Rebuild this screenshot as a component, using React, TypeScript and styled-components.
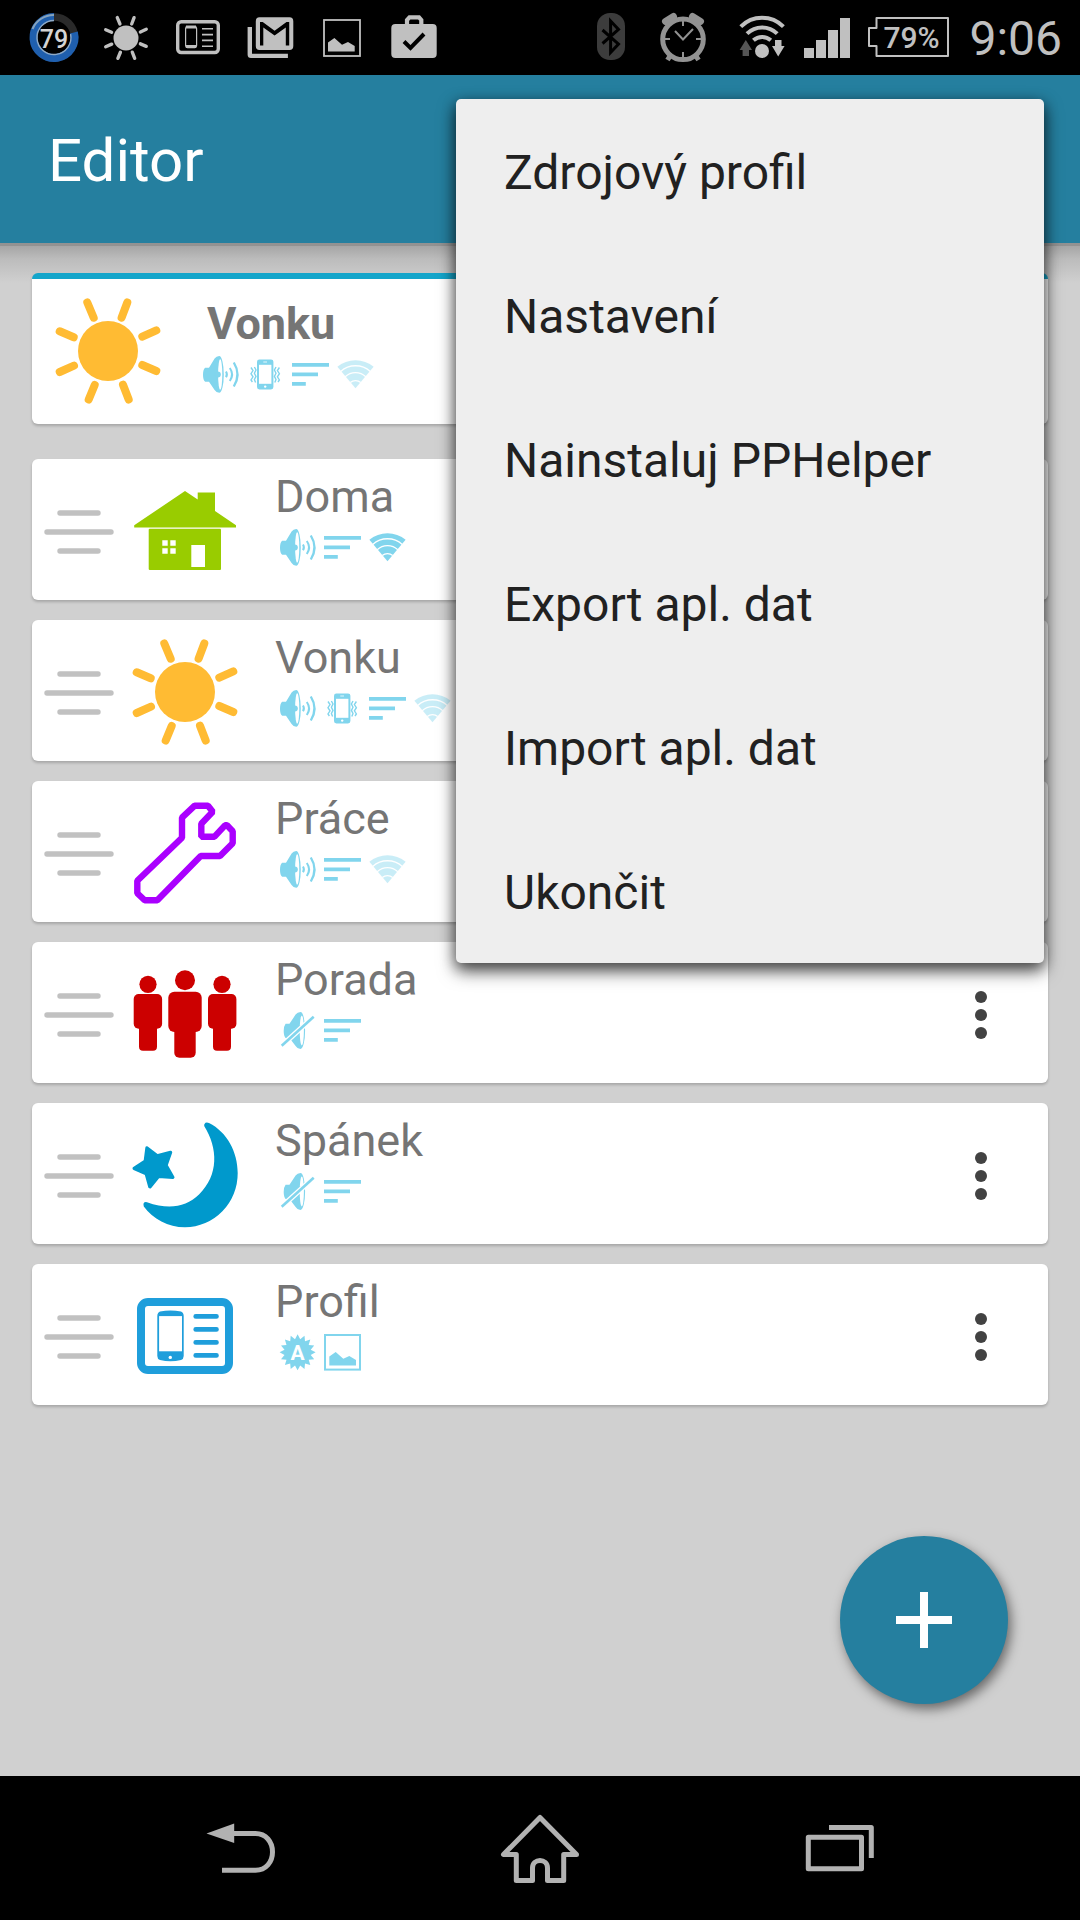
import React from "react";
import styled, { createGlobalStyle } from "styled-components";

const GlobalStyle = createGlobalStyle`
  *, *::before, *::after { box-sizing: border-box; }
  body { margin: 0; font-family: Roboto, "Noto Sans", sans-serif; background: #d0d0d0; }
  button { font: inherit; color: inherit; background: none; border: 0; padding: 0; cursor: pointer; }
  svg { display: block; flex: none; }
`;

const Screen = styled.div`
  position: relative;
  display: flex;
  flex-direction: column;
  min-height: 100vh;
`;

const StatusBar = styled.header`
  display: flex;
  align-items: center;
  justify-content: space-between;
  height: 75px;
  padding: 0 18px;
  background: #000;
  color: #c0c0c0;
`;

const StatusGroup = styled.div<{ $gap?: number }>`
  display: flex;
  align-items: center;
  gap: ${(p) => p.$gap ?? 0}px;
`;

const Clock = styled.time`
  padding-top: 2px;
  font-size: 48px;
  line-height: 76px;
`;

const AppBar = styled.div`
  display: flex;
  align-items: center;
  height: 168px;
  padding: 4px 48px 0;
  background: #257f9f;
`;

const AppTitle = styled.h1`
  margin: 0;
  color: #fff;
  font-size: 60px;
  font-weight: 400;
  line-height: 72px;
`;

const Content = styled.main`
  position: relative;
  flex: 1;
  padding: 30px 32px;
  background:
    linear-gradient(#929292, #929292) top / 100% 3px no-repeat,
    linear-gradient(#a0a0a0, #bcbcbc 16px, #d0d0d0 40px) top / 100% 40px no-repeat,
    #d0d0d0;
`;

const Card = styled.article`
  display: flex;
  background: #fff;
  border-radius: 6px;
  box-shadow: 0 2px 3px rgba(0, 0, 0, 0.2);
`;

const ActiveCard = styled(Card)`
  height: 151px;
  margin-bottom: 35px;
  padding: 18px 22px;
  border-top: 6px solid #14a5ca;

  > svg { margin-right: 36px; }
`;

const ProfileList = styled.ul`
  display: flex;
  flex-direction: column;
  gap: 20px;
  margin: 0;
  padding: 0;
  list-style: none;
`;

const ProfileCard = styled(Card)`
  height: 141px;
  padding: 11px 32px 0 12px;
`;

const Handle = styled.button`
  width: 70px;
  margin-right: 17px;
  padding-bottom: 6px;
  cursor: grab;
`;

const IconSlot = styled.div`
  padding-top: 7px;
  margin-right: 36px;
`;

const Info = styled.div`
  flex: 1;
`;

const ProfileName = styled.h2<{ $active?: boolean }>`
  margin: 0;
  padding-left: ${(p) => (p.$active ? 9 : 0)}px;
  color: #757575;
  font-size: 45px;
  font-weight: ${(p) => (p.$active ? 700 : 400)};
  line-height: 54px;
`;

const Indicators = styled.div`
  display: flex;
`;

const MoreButton = styled.button`
  width: 70px;
  padding-bottom: 6px;
`;

const Menu = styled.div`
  position: absolute;
  z-index: 2;
  top: 99px;
  right: 36px;
  width: 588px;
  display: flex;
  flex-direction: column;
  background: #eee;
  border-radius: 5px;
  box-shadow: 0 8px 18px rgba(0, 0, 0, 0.6), 0 4px 14px rgba(0, 0, 0, 0.4);
`;

const MenuItem = styled.button`
  height: 144px;
  padding: 4px 48px 0;
  color: #212121;
  font-size: 48px;
  line-height: 56px;
  text-align: left;
`;

const AddButton = styled.button`
  position: absolute;
  right: 72px;
  bottom: 72px;
  display: grid;
  place-items: center;
  width: 168px;
  height: 168px;
  border-radius: 50%;
  background: #257f9f;
  box-shadow: 3px 5px 12px rgba(0, 0, 0, 0.5);
`;

const NavBar = styled.nav`
  display: flex;
  height: 144px;
  padding: 0 90px;
  background: #000;
`;

const NavButton = styled.button`
  flex: 1;
  display: grid;
  place-items: center;
`;

const BLUE = "#81d5ed";

/* ---------- profile icons ---------- */

const SUN_RAYS =
  "M33.3 5.5 39.7 20.7M73.3 5.5 67.6 20.7M5.7 34.3 19.7 40.3M102.3 33.3 88.3 39.7M5.7 75 20 68.7M88.3 68 102.3 74M34.7 102.5 40.7 88M74.7 102.5 69 87.7";

const Sun = () => (
  <svg width="108" height="108" viewBox="0 0 108 108">
    <circle cx="54" cy="54" r="30" fill="#ffbb33" />
    <path d={SUN_RAYS} stroke="#ffbb33" strokeWidth="8" strokeLinecap="round" />
  </svg>
);

const House = () => (
  <svg width="108" height="108" viewBox="0 0 108 108" fill="#99cc00">
    <path d="M54 14 66.7 22.5V15.5H84V34L105 48.3V50.5H3.2V48.3Z" />
    <path
      fillRule="evenodd"
      d="M18.5 51.7H89.3L90 52.5V92.2L89.3 93H18.5L17.7 92.2V52.5ZM31.3 63.3V68.7H36.7V63.3ZM39.3 63.3V68.7H44.7V63.3ZM31.3 71.3V76.7H36.7V71.3ZM39.3 71.3V76.7H44.7V71.3ZM60.3 68V90H74V68Z"
    />
  </svg>
);

const Wrench = () => (
  <svg width="108" height="108" viewBox="0 0 108 108" fill="none" stroke="#aa00ff" strokeWidth="6.4" strokeLinejoin="bevel">
    <path d="M63.7 6.7H77L81.7 12.8 70.3 24.8V37.7H83.5L94 26.3H96L101.7 32.3V44.3L89 57H69.7L26.3 101.3H13.7L6.3 94.3V81.7L51 38.7V18.7Z" />
  </svg>
);

const People = () => (
  <svg width="108" height="108" viewBox="0 0 108 108" fill="#cc0000">
    <circle cx="17" cy="24.3" r="8.6" />
    <circle cx="91" cy="24.3" r="8.6" />
    <circle cx="54" cy="20.3" r="10" />
    <rect x="2.7" y="34" width="28.4" height="34.8" rx="5" />
    <rect x="8" y="50" width="18" height="40.7" rx="4" />
    <rect x="77" y="34" width="28.4" height="34.8" rx="5" />
    <rect x="82" y="50" width="18" height="40.7" rx="4" />
    <rect x="37.3" y="31.7" width="33.4" height="40.3" rx="6" />
    <rect x="43.3" y="50" width="21.4" height="47.7" rx="5" />
  </svg>
);

const Moon = () => (
  <svg width="108" height="108" viewBox="0 0 108 108" fill="#0099cc">
    <path d="M74.5 1.8Q76 1 78 2C96 11 106.7 31 106.7 52A53 54 0 0 1 54 106.3C37 106.3 22 98 12.8 85.5Q11.4 80.5 16 81.2C38 89 55 86 68 73.5C88 54 87 27 73.2 5Q72.8 3 74.5 1.8Z" />
    <path
      d="M16 27 26.2 34.8 39.5 31.5 35 44.3 41.8 56.3 27.6 55.2 18.9 65.8 15.2 52.6 3.2 47.5 14.3 40.2Z"
      stroke="#0099cc"
      strokeWidth="3.4"
      strokeLinejoin="round"
    />
  </svg>
);

const ProfileGlyph = () => (
  <svg width="108" height="108" viewBox="0 0 108 108">
    <rect x="10" y="20" width="88" height="68" rx="7" fill="none" stroke="#1f9edb" strokeWidth="8" />
    <path d="M29 29.5Q39.5 27.3 50 29.5 52.7 30.5 52.7 34V74Q52.7 77 50 78 39.5 80.5 29 78 26.3 77 26.3 74V34Q26.3 30.5 29 29.5Z" fill="#1f9edb" />
    <rect x="28.1" y="34.1" width="22.9" height="35.2" fill="#fff" />
    <circle cx="39.3" cy="75.4" r="1.7" fill="#fff" />
    <path d="M64.8 34.4H85.4M64.8 47.4H85.4M64.8 60.4H85.4M64.8 73.4H85.4" stroke="#1f9edb" strokeWidth="4.9" strokeLinecap="round" />
  </svg>
);

/* ---------- indicators ---------- */

const Speaker = () => (
  <svg width="45" height="45" viewBox="0 0 45 45" fill="none">
    <path d="M11 16.7 16.6 7.6Q18.4 5 21.2 5A4.6 18.4 0 0 1 21.2 41.8Q18.4 41.8 16.6 39L11 30.7H7.2Q5 29 5 23.7T7.2 16.7Z" fill={BLUE} />
    <ellipse cx="22.2" cy="23.4" rx="2.1" ry="15.2" fill="#fff" />
    <circle cx="19.8" cy="23.4" r="3" fill={BLUE} />
    <path d="M28 20.5Q29.8 23.4 28 26.3" stroke={BLUE} strokeWidth="2" />
    <path d="M31.8 17Q36.4 23.4 31.8 30" stroke={BLUE} strokeWidth="2" />
    <path d="M35.8 11.5Q43.2 23.4 35.8 35.5" stroke={BLUE} strokeWidth="2.3" />
  </svg>
);

const Muted = () => (
  <svg width="45" height="45" viewBox="0 0 45 45" fill="none">
    <path d="M14.5 16.7 20.6 7.6Q22.4 5 25.5 5A4.6 18.5 0 0 1 25.5 42Q22.4 42 20.6 39L14.5 31H10.6Q8.7 29 8.7 24T10.6 16.7Z" fill={BLUE} />
    <ellipse cx="26.8" cy="23.5" rx="2.1" ry="15" fill="#fff" />
    <circle cx="24.4" cy="21.5" r="3" fill={BLUE} />
    <path d="M5.2 40 40 8.6" stroke="#fff" strokeWidth="5.2" />
    <path d="M6.7 38.7 38.7 9.7" stroke={BLUE} strokeWidth="2.6" />
  </svg>
);

const Vibrate = () => (
  <svg width="45" height="45" viewBox="0 0 45 45" fill="none">
    <rect x="14" y="8.4" width="16.4" height="30" rx="2.4" fill={BLUE} />
    <rect x="16" y="13.8" width="12.4" height="19" fill="#fff" />
    <path d="M20.3 11H24" stroke="#fff" strokeWidth="0.8" />
    <circle cx="22.2" cy="35.6" r="1.2" fill="#fff" />
    <path
      d="M8 16.5 10 19.6 8 22.7 10 25.8 8 28.9 9.4 31M11.4 16 13 19 11.4 22.2 13 25.4 11.4 28.5 12.6 31.5M36.4 16.5 34.4 19.6 36.4 22.7 34.4 25.8 36.4 28.9 35 31M33 16 31.4 19 33 22.2 31.4 25.4 33 28.5 31.8 31.5"
      stroke={BLUE}
      strokeWidth="1.4"
    />
  </svg>
);

const Lines = () => (
  <svg width="45" height="45" viewBox="0 0 45 45" fill={BLUE}>
    <path d="M4 12H41V15.8H4ZM4 21.6H30V25.2H4ZM4 31H17.8V34.8H4Z" />
  </svg>
);

const Wifi = ({ faded }: { faded?: boolean }) => (
  <svg width="45" height="45" viewBox="0 0 45 45" fill="none" opacity={faded ? 0.42 : 1}>
    <path d="M22.5 37.2 4.4 15.7A28.4 28.4 0 0 1 40.6 15.7Z" fill={BLUE} />
    <path d="M7.7 20.4A22.2 22.2 0 0 1 37.3 20.4M12.2 25.8A15 15 0 0 1 32.8 25.8M17.3 31.6A7.8 7.8 0 0 1 27.7 31.6" stroke="#fff" strokeWidth="1.3" />
  </svg>
);

const burst = Array.from({ length: 32 }, (_, i) => {
  const r = i % 2 ? 13.4 : 18;
  const a = (i * Math.PI) / 16 - Math.PI / 2;
  return `${(22.6 + r * Math.cos(a)).toFixed(1)},${(23.3 + r * Math.sin(a)).toFixed(1)}`;
}).join(" ");

const AutoBadge = () => (
  <svg width="45" height="45" viewBox="0 0 45 45">
    <polygon points={burst} fill={BLUE} />
    <text x="22.6" y="30.6" textAnchor="middle" fontSize="21" fontWeight="700" fill="#fff">A</text>
  </svg>
);

const PICTURE_HILLS = "M9.3 36.4V27.6L15.7 23 23.3 29.8 29.3 27 36 31V36.4Z";

const Picture = () => (
  <svg width="45" height="45" viewBox="0 0 45 45">
    <rect x="5" y="6" width="35" height="34.6" fill="none" stroke={BLUE} strokeWidth="2" />
    <path d={PICTURE_HILLS} fill={BLUE} />
  </svg>
);

/* ---------- status bar icons ---------- */

const BatteryRing = () => (
  <svg width="72" height="75" viewBox="0 0 72 75" fill="none">
    <circle cx="36" cy="37.5" r="20.5" stroke="#2a2a2a" strokeWidth="7.5" />
    <path d="M55.9 32.5A20.5 20.5 0 1 1 36 17" stroke="#1f5fae" strokeWidth="8" />
    <path d="M52.6 34A17 17 0 1 1 36 20.5" stroke="#8fa9c4" strokeWidth="1.4" />
    <path d="M14.5 29A23 23 0 0 1 36 15" stroke="#86a3bd" strokeWidth="2" />
    <text x="36" y="47.5" textAnchor="middle" fontSize="25" fontWeight="500" fill="#d4d4d4">79</text>
  </svg>
);

const StatusSun = () => (
  <svg width="72" height="75" viewBox="0 0 72 75" fill="#c0c0c0">
    <circle cx="36" cy="38" r="12.5" />
    <path transform="translate(13.3 15.3) scale(.42)" d={SUN_RAYS} stroke="#c0c0c0" strokeWidth="8" strokeLinecap="round" />
  </svg>
);

const StatusProfile = () => (
  <svg width="72" height="75" viewBox="0 0 72 75" fill="none" stroke="#c0c0c0">
    <rect x="15.7" y="21.7" width="40.6" height="30.8" rx="3.5" strokeWidth="3.4" />
    <rect x="23.6" y="26.6" width="11" height="21" rx="1.8" strokeWidth="1.2" />
    <path d="M24 27H34M24 46.5H34" strokeWidth="2.8" />
    <path d="M40 28.8H51M40 34.6H51M40 40.4H51M40 46.2H51" strokeWidth="1.6" />
  </svg>
);

const StatusMail = () => (
  <svg width="72" height="75" viewBox="0 0 72 75" fill="#c0c0c0">
    <path d="M13.6 27H18V53.8H53.9V58H17Q13.6 58 13.6 54.5Z" />
    <path
      fillRule="evenodd"
      d="M25.5 17.3H55.5Q59.3 17.3 59.3 21.5V46Q59.3 50 55.5 50H25.5Q21.8 50 21.8 46V21.5Q21.8 17.3 25.5 17.3ZM26 22V45.5H29.3V27.5L40.6 35.6 51.8 27.5V45.5H55.2V22H52.5L40.6 30.8 28.7 22Z"
    />
  </svg>
);

const StatusPicture = () => (
  <svg width="72" height="75" viewBox="0 0 72 75">
    <rect x="18" y="20" width="36" height="36" fill="none" stroke="#c0c0c0" strokeWidth="1.8" />
    <path transform="translate(12.7 15)" d={PICTURE_HILLS} fill="#c0c0c0" />
  </svg>
);

const StatusBag = () => (
  <svg width="72" height="75" viewBox="0 0 72 75" fill="none">
    <rect x="13.3" y="24" width="45.4" height="34" rx="4" fill="#c0c0c0" />
    <path d="M29 25V20L31.5 17.3H41L43.3 20V25" stroke="#c0c0c0" strokeWidth="4.2" />
    <path d="M26 41.5 32.5 48 46 34" stroke="#000" strokeWidth="4" />
  </svg>
);

const Bluetooth = () => (
  <svg width="52" height="75" viewBox="0 0 52 75" fill="none">
    <rect x="14" y="13" width="28" height="47" rx="13" fill="#3c3c3c" />
    <path d="M19.5 30 35.5 44 27.6 52.5V21L35.5 29.5 19.5 43.5" stroke="#000" strokeWidth="3" />
  </svg>
);

const Alarm = () => (
  <svg width="68" height="75" viewBox="0 0 68 75" fill="none" stroke="#929292">
    <circle cx="30" cy="39.3" r="20.3" strokeWidth="5" />
    <path d="M12.5 21.5 20.5 16.5M47.5 21.5 39.5 16.5" strokeWidth="7" strokeLinecap="round" />
    <path d="M17 56 14.5 60M43 56 45.5 60" strokeWidth="5" />
    <path d="M30 21V26M30 52V57M12 39H17M43 39H48" strokeWidth="2" />
    <path d="M22 31 30 39.5 40 29" strokeWidth="2" />
  </svg>
);

const StatusWifi = () => (
  <svg width="47" height="75" viewBox="0 0 47 75" fill="none" stroke="#c0c0c0" strokeWidth="4">
    <path d="M1.8 26.7A30 30 0 0 1 44.4 26.7M8 33.6A21.5 21.5 0 0 1 38.2 33.6M14.4 40.3A12.8 12.8 0 0 1 31.8 40.3" />
    <circle cx="23" cy="51" r="7" fill="#c0c0c0" stroke="none" />
    <path d="M6.8 40 13 50H10V56H3.6V50H.6Z" fill="#555" stroke="none" />
    <path d="M39.2 56.5 45.6 46H42.5V40H36V46H33Z" fill="#c0c0c0" stroke="none" />
  </svg>
);

const Signal = () => (
  <svg width="46" height="75" viewBox="0 0 46 75" fill="#c0c0c0">
    <path d="M0 48H10V58H0ZM12 40H22V58H12ZM24 30H34V58H24ZM36 18H46V58H36Z" />
  </svg>
);

const Battery = () => (
  <svg width="83" height="75" viewBox="0 0 83 75">
    <path d="M8.5 18H80V56H8.5V46H1V28H8.5Z" fill="none" stroke="#c0c0c0" strokeWidth="2" strokeLinejoin="round" />
    <text x="43.5" y="47.6" textAnchor="middle" fontSize="30" fontWeight="500" fill="#c0c0c0">79%</text>
  </svg>
);

/* ---------- data ---------- */

const profiles = [
  { name: "Doma", Icon: House, marks: [Speaker, Lines, Wifi] },
  { name: "Vonku", Icon: Sun, marks: [Speaker, Vibrate, Lines, Wifi], wifiOff: true },
  { name: "Práce", Icon: Wrench, marks: [Speaker, Lines, Wifi], wifiOff: true },
  { name: "Porada", Icon: People, marks: [Muted, Lines] },
  { name: "Spánek", Icon: Moon, marks: [Muted, Lines] },
  { name: "Profil", Icon: ProfileGlyph, marks: [AutoBadge, Picture] },
];

const menuItems = ["Zdrojový profil", "Nastavení", "Nainstaluj PPHelper", "Export apl. dat", "Import apl. dat", "Ukončit"];

export default function App() {
  return (
    <Screen>
      <GlobalStyle />
      <StatusBar>
        <StatusGroup>
          <BatteryRing />
          <StatusSun />
          <StatusProfile />
          <StatusMail />
          <StatusPicture />
          <StatusBag />
        </StatusGroup>
        <StatusGroup $gap={18}>
          <Bluetooth />
          <Alarm />
          <StatusWifi />
          <Signal />
          <Battery />
          <Clock>9:06</Clock>
        </StatusGroup>
      </StatusBar>

      <AppBar>
        <AppTitle>Editor</AppTitle>
      </AppBar>

      <Content>
        <ActiveCard>
          <Sun />
          <Info>
            <ProfileName $active>Vonku</ProfileName>
            <Indicators>
              <Speaker />
              <Vibrate />
              <Lines />
              <Wifi faded />
            </Indicators>
          </Info>
        </ActiveCard>

        <ProfileList>
          {profiles.map(({ name, Icon, marks, wifiOff }) => (
            <li key={name}>
              <ProfileCard>
                <Handle aria-label="Move">
                  <svg width="70" height="124" viewBox="0 0 70 124">
                    <path d="M16 43H54M3 62H67M16 81H54" stroke="#c1c1c1" strokeWidth="5.4" strokeLinecap="round" />
                  </svg>
                </Handle>
                <IconSlot>
                  <Icon />
                </IconSlot>
                <Info>
                  <ProfileName>{name}</ProfileName>
                  <Indicators>
                    {marks.map((Mark, i) => (
                      <Mark key={i} faded={wifiOff} />
                    ))}
                  </Indicators>
                </Info>
                <MoreButton aria-label="More">
                  <svg width="70" height="124" viewBox="0 0 70 124" fill="#424242">
                    <circle cx="35" cy="44" r="6" />
                    <circle cx="35" cy="62" r="6" />
                    <circle cx="35" cy="80" r="6" />
                  </svg>
                </MoreButton>
              </ProfileCard>
            </li>
          ))}
        </ProfileList>

        <AddButton aria-label="Add">
          <svg width="56" height="56" viewBox="0 0 56 56">
            <path d="M28 0V56M0 28H56" stroke="#fff" strokeWidth="8" />
          </svg>
        </AddButton>
      </Content>

      <NavBar>
        <NavButton aria-label="Back">
          <svg width="80" height="144" viewBox="0 0 80 144" fill="none">
            <path d="M33 57.5H55.5C66 57.5 72.5 66 72.5 76S66 94.3 55.5 94.3H22" stroke="#b2b2b2" strokeWidth="5" />
            <path d="M6.5 57.5 34.2 47.5V67Z" fill="#b2b2b2" />
          </svg>
        </NavButton>
        <NavButton aria-label="Home">
          <svg width="80" height="144" viewBox="0 0 80 144" fill="none" stroke="#b2b2b2" strokeWidth="5" strokeLinejoin="round">
            <path d="M40 41.5 3.5 78.5H16.3V104.5H32.5V92C32.5 82 47.5 82 47.5 92V104.5H63.7V78.5H76.5Z" />
          </svg>
        </NavButton>
        <NavButton aria-label="Recent apps">
          <svg width="80" height="144" viewBox="0 0 80 144" fill="none" stroke="#b2b2b2" strokeWidth="5">
            <rect x="8.3" y="61.3" width="53.2" height="31.4" strokeLinejoin="round" />
            <path d="M29 51.5H71.3V82" strokeLinejoin="round" />
          </svg>
        </NavButton>
      </NavBar>

      <Menu role="menu">
        {menuItems.map((item) => (
          <MenuItem key={item} role="menuitem">
            {item}
          </MenuItem>
        ))}
      </Menu>
    </Screen>
  );
}
